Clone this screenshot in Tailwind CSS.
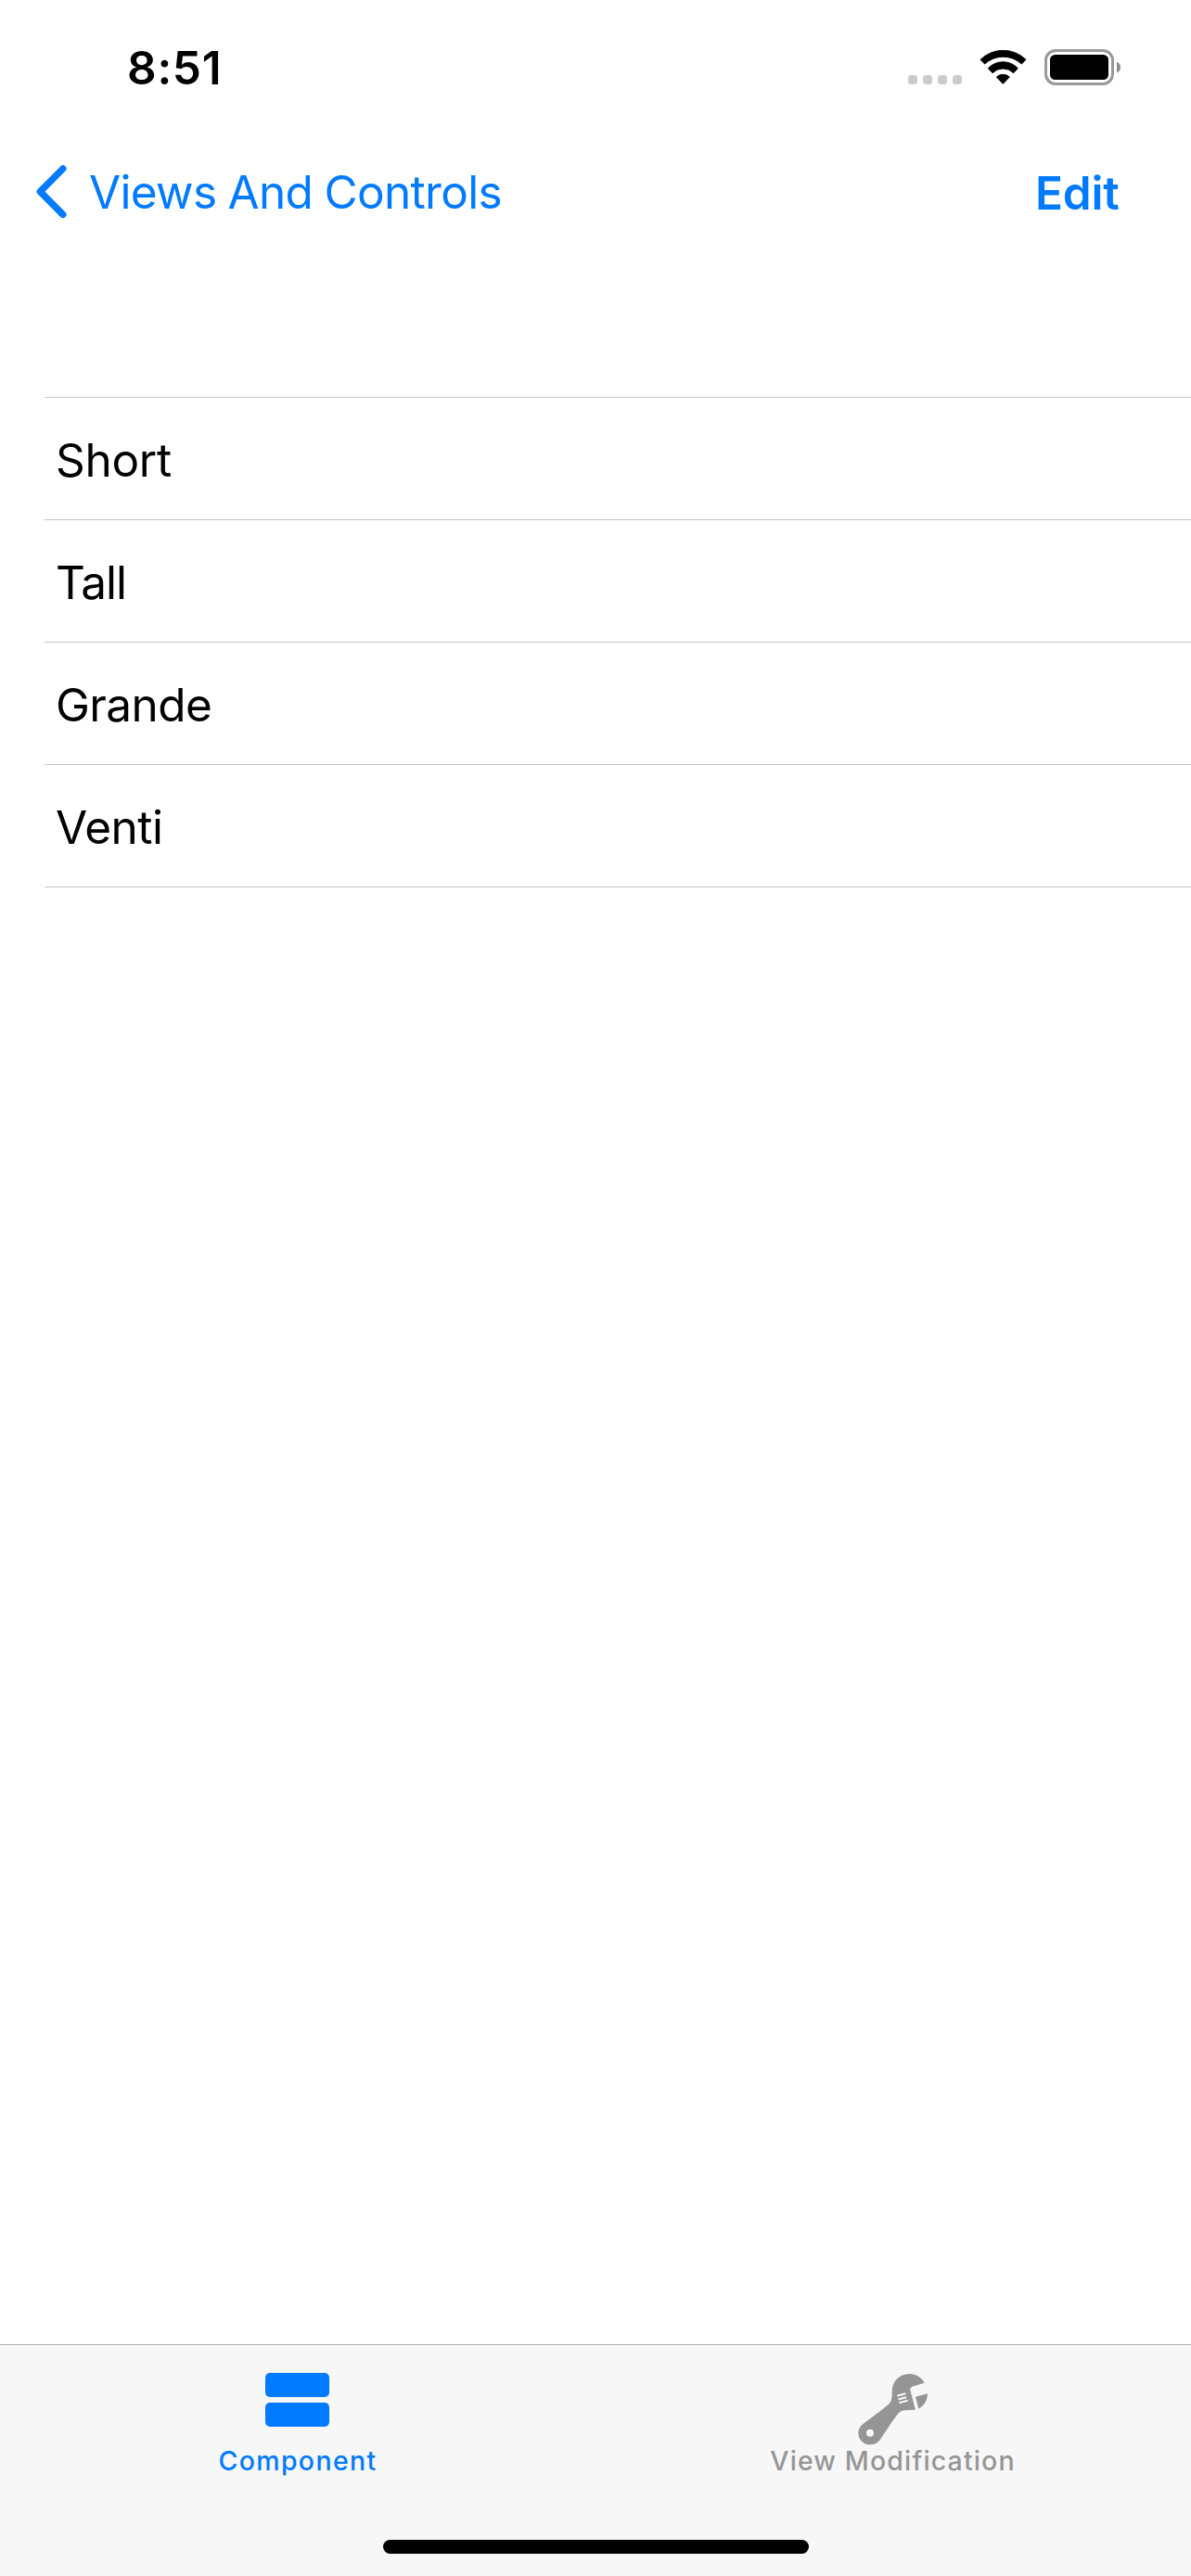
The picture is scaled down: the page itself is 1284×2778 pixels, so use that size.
<!DOCTYPE html>
<html lang="en">
<head>
<meta charset="utf-8">
<title>Views And Controls</title>
<script src="https://cdn.jsdelivr.net/npm/@tailwindcss/browser@4"></script>
</head>
<body class="bg-white">
<div class="flex h-[2778px] w-[1284px] flex-col overflow-hidden bg-white font-['Inter',sans-serif] text-[49.5px] leading-[60px] text-black">

  <!-- Status bar -->
  <div class="flex h-[141px] shrink-0 items-start justify-between pr-[76px] pl-[137px]">
    <div class="pt-[43px] font-semibold tracking-[0.7px]">8:51</div>
    <div class="flex items-end gap-[19px] pt-[53px]">
      <div class="mb-px flex gap-1.5">
        <span class="size-2.5 rounded-[3.5px] bg-[#cbcbcb]"></span>
        <span class="size-2.5 rounded-[3.5px] bg-[#cbcbcb]"></span>
        <span class="size-2.5 rounded-[3.5px] bg-[#cbcbcb]"></span>
        <span class="size-2.5 rounded-[3.5px] bg-[#cbcbcb]"></span>
      </div>
      <svg class="mb-px h-[37px] w-[51px]" viewBox="288 72 153 111" fill="#000" stroke="#000" stroke-width="3" stroke-linejoin="round">
        <path d="M291 103A105 105 0 0 1 438 103L424 117A87 87 0 0 0 305 117Z"/>
        <path d="M316 131A66 66 0 0 1 412 131L398 146A48 48 0 0 0 330 146Z"/>
        <path d="M343 159A31 31 0 0 1 385 159L364 181Z"/>
      </svg>
      <svg class="h-[39px] w-[82px]" viewBox="0 0 82 39">
        <rect x="1.5" y="1.5" width="72" height="36" rx="10.5" fill="none" stroke="#999" stroke-width="3"/>
        <rect x="6" y="6" width="63" height="27" rx="5.5" fill="#000"/>
        <path d="M78 13.5Q82 15.5 82 19.5T78 25.5Z" fill="#8c8c8c"/>
      </svg>
    </div>
  </div>

  <!-- Navigation bar -->
  <div class="flex h-[132px] shrink-0 items-center justify-between pr-[77.5px] pl-[37px] text-[#007aff]">
    <div class="flex items-center gap-[23px]">
      <svg class="h-[60px] w-9" viewBox="0 0 36 60" fill="none" stroke="#007aff" stroke-width="7.4" stroke-linecap="round" stroke-linejoin="round">
        <path d="M30.8 5L6.3 29.7L30.8 54.4"/>
      </svg>
      <span class="tracking-[-0.68px] [word-spacing:-1px]">Views And Controls</span>
    </div>
    <span class="pt-0.5 font-semibold tracking-[-0.2px]">Edit</span>
  </div>

  <!-- List -->
  <ul class="mt-[155px] ml-12 border-t border-[#c4c4c5]">
    <li class="flex h-[132px] items-center border-b border-[#c4c4c5] pt-[3px] pl-3 tracking-[-0.3px]">Short</li>
    <li class="flex h-[132px] items-center border-b border-[#c4c4c5] pt-[3px] pl-3 tracking-[-1.05px]">Tall</li>
    <li class="flex h-[132px] items-center border-b border-[#c4c4c5] pt-[3px] pl-3 tracking-[-0.6px]">Grande</li>
    <li class="flex h-[132px] items-center border-b border-[#c4c4c5] pt-[3px] pl-3 tracking-[-0.5px]">Venti</li>
  </ul>

  <!-- Tab bar -->
  <div class="mt-auto flex h-[250px] shrink-0 flex-col items-center border-t border-[#b2b2b2] bg-[#f7f7f7]">
    <div class="grid w-full grid-cols-2 text-[28.5px] leading-9 font-medium">
      <div class="flex flex-col items-center text-[#007aff]">
        <div class="flex h-[107px] flex-col gap-1.5 pt-[30px] pr-px">
          <span class="h-[26px] w-[69px] rounded-[5px] bg-[#007aff]"></span>
          <span class="h-[26px] w-[69px] rounded-[5px] bg-[#007aff]"></span>
        </div>
        <span class="tracking-[1.35px]">Component</span>
      </div>
      <div class="flex flex-col items-center text-[#959595]">
        <svg class="mt-4 mb-px h-[90px] w-[100px] overflow-visible" viewBox="9 0 300 270" fill="#959595">
          <path fill-rule="evenodd" d="M260 74C250 56 232 45 210 45C179 45 155 70 155 101C155 122 156 134 139 148C118 166 85 189 62 207C51 215 46 225 46 236C46 258 63 274 84 274C98 274 109 268 117 257C134 233 148 209 165 187C175 173 182 164 196 163L231 161L214 98C213 92 215 88 221 86ZM96 236A12 12 0 1 1 72 236A12 12 0 1 1 96 236Z"/>
          <path d="M231 119L270 109C270 130 259 148 241 158Z"/>
          <path d="M172 116.500L199 109M175 127.500L202 120.500M178 139L206 131.500" fill="none" stroke="#f7f7f7" stroke-width="6"/>
        </svg>
        <span class="pr-px tracking-[1.13px]">View Modification</span>
      </div>
    </div>
    <div class="mt-auto mb-6 h-[15px] w-[459px] rounded-full bg-black"></div>
  </div>
</div>
</body>
</html>
